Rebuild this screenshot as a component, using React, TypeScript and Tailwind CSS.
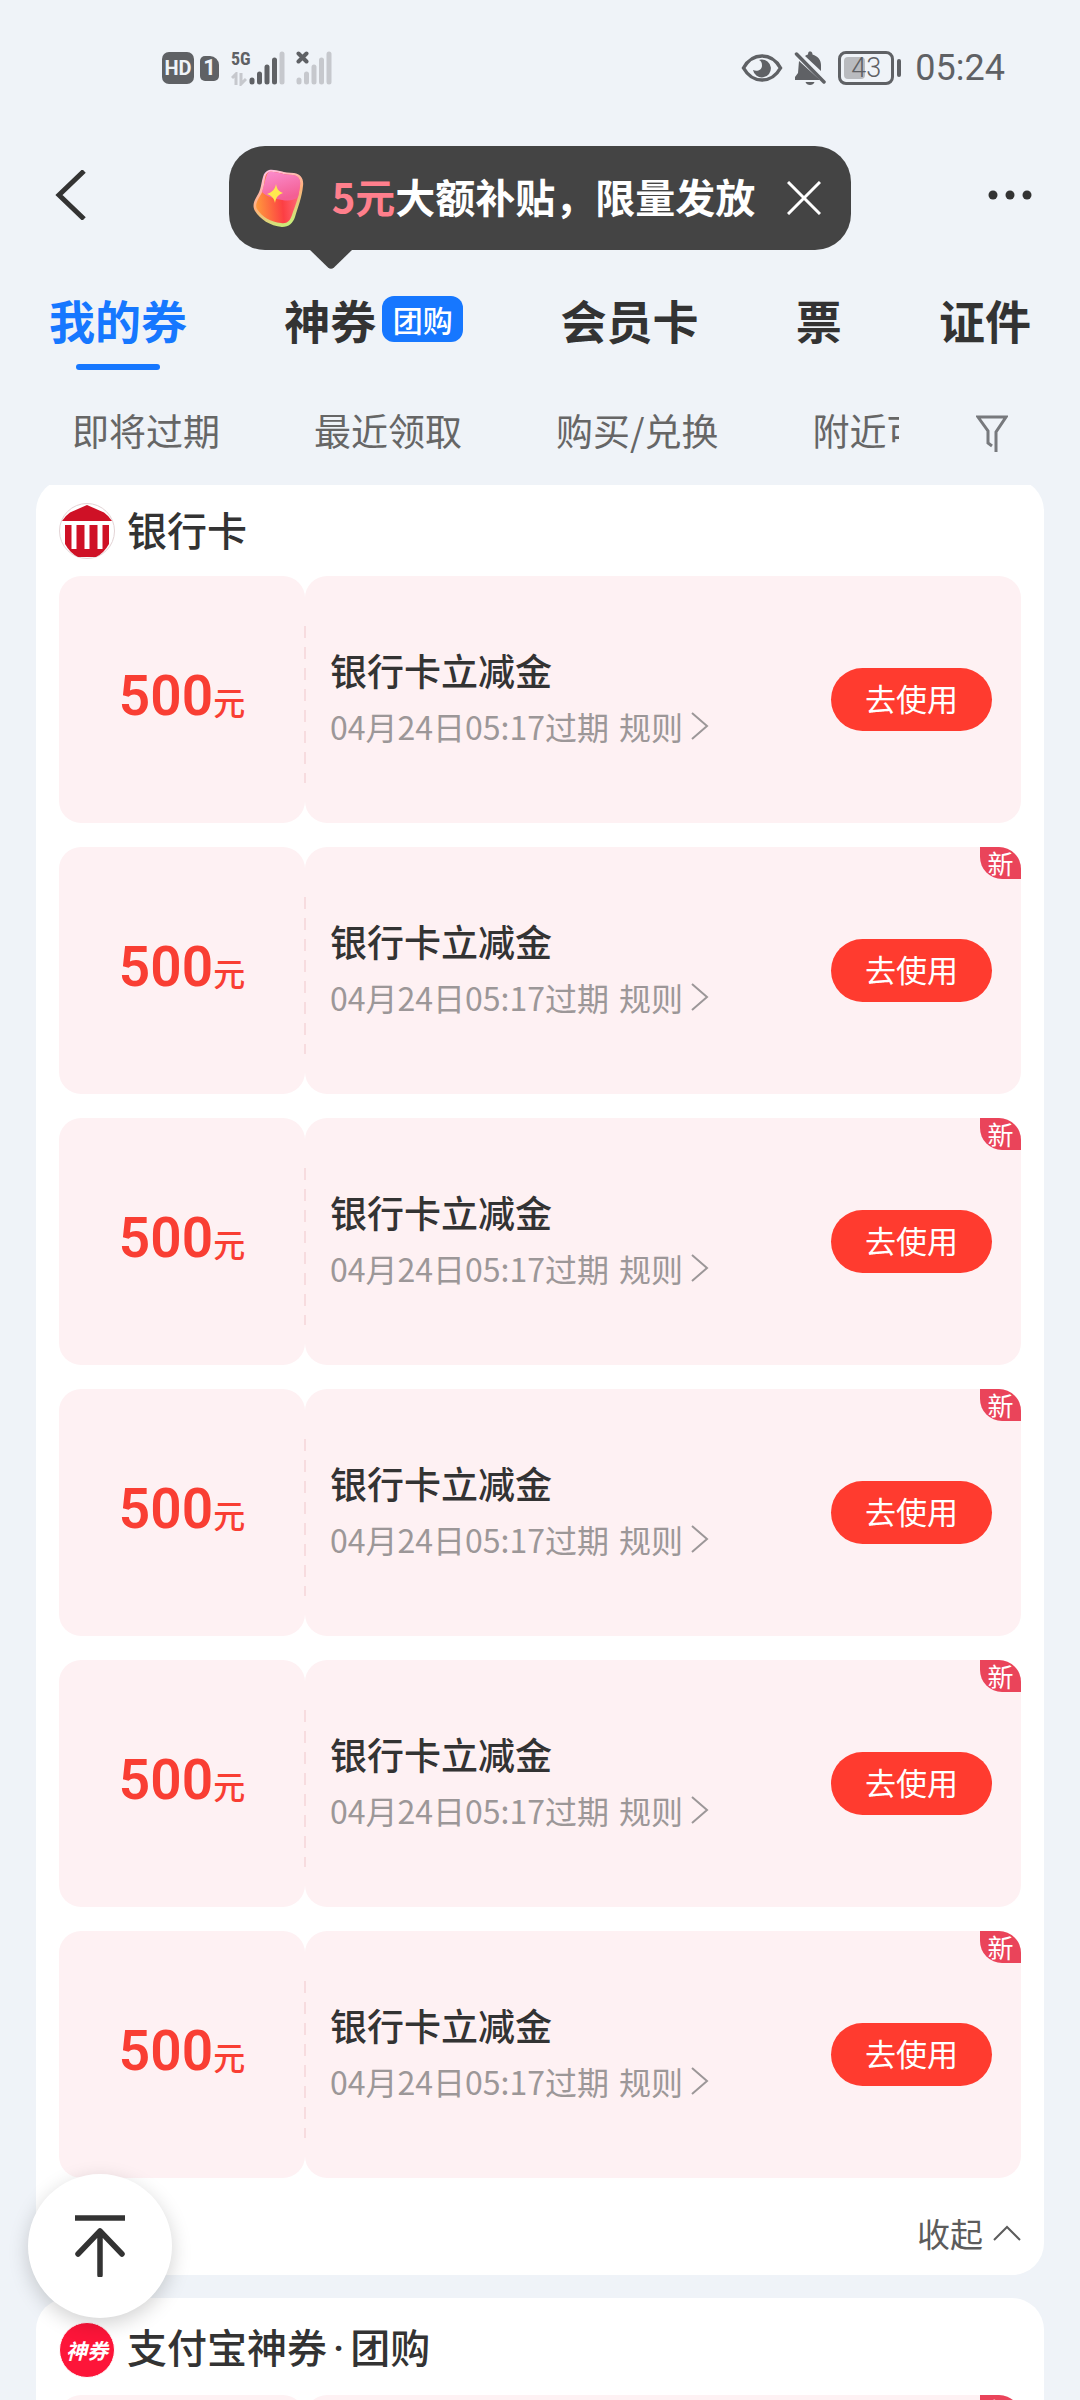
import React, { useState } from 'react';

interface Coupon {
  id: number;
  amount: string;
  title: string;
  expires: string;
  isNew: boolean;
}

const makeCoupons = (count: number, firstIsNew: boolean): Coupon[] =>
  Array.from({ length: count }, (_, i) => ({
    id: i,
    amount: '500',
    title: '银行卡立减金',
    expires: '04月24日05:17过期',
    isNew: firstIsNew || i > 0,
  }));

const bankCoupons = makeCoupons(6, false);
const dealCoupons = makeCoupons(1, true);

const tabs = [
  { label: '我的券' },
  { label: '神券', badge: '团购' },
  { label: '会员卡' },
  { label: '票' },
  { label: '证件' },
];

const filters = ['即将过期', '最近领取', '购买/兑换', '附近可用'];

const SignalBars: React.FC<{ active: number }> = ({ active }) => (
  <svg className="w-[36px] h-[34px]" viewBox="0 0 36 34" fill="none" strokeWidth="5" strokeLinecap="round">
    {[29, 23, 16, 9, 3].map((top, i) => (
      <path key={top} d={`M${3 + i * 7.5} ${top}V31`} stroke={i < active ? '#5f6165' : '#c6c8cd'} />
    ))}
  </svg>
);

const StatusBar: React.FC = () => (
  <div className="flex h-[136px] shrink-0 items-center justify-between pl-[162px] pr-[75px] text-[#5f6165]">
    <div className="flex items-center">
      <span className="flex h-8 w-8 items-center justify-center rounded-[7px] bg-[#5f6165] font-['Roboto',sans-serif] text-[20px] font-bold leading-none text-[#eff3f8]">
        HD
      </span>
      <span className="ml-1.5 flex h-[25px] w-[19px] items-center justify-center rounded-[5px] rounded-tr-[9px] bg-[#5f6165] font-['Roboto',sans-serif] text-[22px] font-bold leading-none text-[#eff3f8]">
        1
      </span>
      <span className="ml-3 flex h-[36px] w-[18px] flex-col justify-between">
        <span className="font-['Roboto_Condensed','Liberation_Sans_Narrow',Roboto,sans-serif] text-[18px] font-bold leading-[18px]">5G</span>
        <svg className="h-[14px] w-[16px]" viewBox="0 0 16 14" fill="none" stroke="#c6c8cd" strokeWidth="3">
          <path d="M1 6L5 2V13M10 1V12L15 7" />
        </svg>
      </span>
      <SignalBars active={4} />
      <span className="relative ml-[11px]">
        <SignalBars active={0} />
        <svg className="absolute left-0 top-0 h-[13px] w-[13px]" viewBox="0 0 13 13" stroke="#5f6165" strokeWidth="4" strokeLinecap="round">
          <path d="M2.500 2.500L10.500 10.500M10.500 2.500L2.500 10.500" />
        </svg>
      </span>
    </div>

    <div className="flex items-center">
      <svg className="h-[30px] w-[42px]" viewBox="0 0 42 30" fill="none">
        <path d="M2.500 15C7 7 13.500 3 21 3s14 4 18.500 12C35 23 28.500 27 21 27S7 23 2.500 15z" stroke="currentColor" strokeWidth="3.500" />
        <path d="M20 6.500a9 9 0 1 1-8 10.500c4 2 9 0 9-4.500 0-3-1-4.500-3-5.500z" fill="currentColor" />
      </svg>
      <svg className="ml-[11px] h-[34px] w-[32px]" viewBox="0 0 32 34" fill="currentColor">
        <path d="M5 10L26 29H1v-3l3-4z" />
        <path d="M11 5c1-.8 2-1.300 3-1.600C14 1 15 .5 16 .5s2.500.5 2.500 2.900C24 5 27 9 27 14v6z" />
        <path d="M11.500 31h9c-1 4-8 4-9 0z" />
        <path d="M2.500 3L30 31" stroke="currentColor" strokeWidth="3.500" strokeLinecap="round" />
      </svg>
      <span className="relative ml-3 flex h-[34px] w-[56px] items-center justify-center rounded-[8px] border-[3px] border-[#5f6165]">
        <span className="absolute left-[3px] top-[3px] h-[22px] w-[21px] rounded-[4px] bg-[#b9bbbf]" />
        <span className="relative font-['Roboto',sans-serif] text-[27px] font-light leading-none">43</span>
      </span>
      <span className="ml-[3px] h-[18px] w-[4px] rounded-full bg-[#5f6165]" />
      <span className="ml-3.5 font-['Roboto',sans-serif] text-[36px] leading-[44px]">05:24</span>
    </div>
  </div>
);

const EnvelopeIcon: React.FC = () => (
  <svg className="h-[60px] w-[54px] shrink-0" viewBox="0 0 54 60">
    <defs>
      <linearGradient id="envBody" x1="0" y1="0.700" x2="1" y2="0.600">
        <stop offset="0" stopColor="#ff9a3c" />
        <stop offset="0.600" stopColor="#fc3f43" />
        <stop offset="1" stopColor="#ff6a7a" />
      </linearGradient>
      <linearGradient id="envFlap" x1="0" y1="0" x2="0.400" y2="1">
        <stop offset="0" stopColor="#fb8fd0" />
        <stop offset="1" stopColor="#f45f94" />
      </linearGradient>
      <linearGradient id="envEdge" x1="0.300" y1="0" x2="0.700" y2="1">
        <stop offset="0" stopColor="#ffc0e2" />
        <stop offset="0.500" stopColor="#ffb07a" />
        <stop offset="1" stopColor="#c4f27a" />
      </linearGradient>
    </defs>
    <path d="M17 2c8-1 13 3 25 3 7 1 10 6 9 13-1 11-5 21-8 31-2 6-6 10-13 10C18 58 8 51 3 43c-3-5-1-10 2-15 4-6 4-12 6-19 1-4 3-6 6-7z" fill="url(#envEdge)" />
    <path d="M17 4c7-1 13 3 24 3 6 1 8 5 7 11-1 11-5 20-8 29-2 6-5 9-11 8C19 54 10 49 5 41c-2-4 0-8 3-13 4-6 4-12 5-18 1-4 2-5 4-6z" fill="url(#envBody)" />
    <path d="M17 4c7-1 13 3 24 3 6 1 8 5 7 11l-2 11c-5 4-10 4-16 3-7-1-15-3-20-8 1-4 2-7 3-11 1-4 2-8 4-9z" fill="url(#envFlap)" />
    <path d="M24 16c1 5 2 7 7 9-5 2-7 4-8 10-1-5-3-7-8-9 5-2 8-4 9-10z" fill="#ffe94f" />
  </svg>
);

const PromoBubble: React.FC<{ onClose: () => void }> = ({ onClose }) => (
  <div className="relative flex h-[104px] items-center rounded-[36px] bg-[#444] px-[23px]">
    <EnvelopeIcon />
    <p className="ml-[26px] whitespace-nowrap pb-1 text-[40px] font-bold leading-[60px] text-white">
      <span className="text-[#ff7f8c]">5元</span>大额补贴，限量发放
    </p>
    <button type="button" aria-label="关闭" onClick={onClose} className="ml-[25px] flex h-12 w-12 items-center justify-center">
      <svg className="h-[34px] w-[34px]" viewBox="0 0 34 34" stroke="#fff" strokeWidth="3">
        <path d="M1 1L33 33M33 1L1 33" />
      </svg>
    </button>
    <svg className="absolute left-[80px] top-[103px] h-[21px] w-[44px]" viewBox="0 0 44 21">
      <path d="M0 0H44L25 18.500Q22 21 19 18.500z" fill="#444" />
    </svg>
  </div>
);

const BankIcon: React.FC = () => (
  <svg className="h-[56px] w-[56px] shrink-0" viewBox="0 0 56 56">
    <circle cx="28" cy="28" r="27.500" fill="#fff" stroke="#e3d3d5" />
    <path d="M28 2L45 9.500Q50 13 53 18H3Q6 13 11 9.500z" fill="#cf1126" />
    <path d="M6 22H50V41Q45 50 37 54H19Q11 50 6 41z" fill="#cf1126" />
    <path d="M15 22V46M28 22V46M41 22V46" stroke="#fff" strokeWidth="5" />
  </svg>
);

const CouponRow: React.FC<{ coupon: Coupon }> = ({ coupon }) => (
  <li className="flex h-[247px]">
    <div className="flex w-[246px] shrink-0 items-center justify-center rounded-[22px] bg-[#fef1f3] pb-2 text-[#f93e33]">
      <p className="flex items-baseline">
        <span className="font-['Roboto',sans-serif] text-[55px] font-semibold leading-[64px]">{coupon.amount}</span>
        <span className="text-[32px] font-medium leading-[48px]">元</span>
      </p>
    </div>
    <div className="relative flex flex-1 items-center justify-between rounded-[22px] bg-[#fef1f3] pl-[25px] pr-[29px]">
      <span className="absolute -left-px top-[50px] h-[157px] w-[2px] bg-[repeating-linear-gradient(to_bottom,#f7dcdf_0_12px,transparent_12px_21px)]" />
      <div className="pb-1">
        <h3 className="text-[37px] font-medium leading-[56px] text-[#333]">{coupon.title}</h3>
        <p className="flex items-center gap-2.5 text-[32px] leading-[56px] text-[#9c9798]">
          <span>{coupon.expires}</span>
          <button type="button" className="flex items-center gap-2">
            规则
            <svg className="h-[28px] w-[18px]" viewBox="0 0 18 28" fill="none" stroke="currentColor" strokeWidth="2">
              <path d="M1 1L16 14L1 27" />
            </svg>
          </button>
        </p>
      </div>
      <button type="button" className="h-[63px] w-[161px] rounded-full bg-[#ff3b2f] pb-1 text-[31px] leading-[56px] text-white">
        去使用
      </button>
      {coupon.isNew && (
        <span className="absolute right-0 top-0 h-[32px] w-[41px] rounded-bl-[22px] rounded-tr-[22px] bg-[#ea445a] text-center text-[26px] leading-[32px] text-white">
          新
        </span>
      )}
    </div>
  </li>
);

interface CouponSectionProps {
  icon: React.ReactNode;
  title: React.ReactNode;
  coupons: Coupon[];
}

const CouponSection: React.FC<CouponSectionProps> = ({ icon, title, coupons }) => {
  const [isExpanded, setIsExpanded] = useState(true);
  const visible = isExpanded ? coupons : coupons.slice(0, 1);

  return (
    <section className="shrink-0 rounded-[32px] bg-white px-[23px]">
      <div className="flex h-[97px] items-center gap-3 pt-[7px]">
        {icon}
        <h2 className="pb-1 text-[40px] font-medium leading-[56px] text-[#333]">{title}</h2>
      </div>
      <ul className="flex flex-col gap-6">
        {visible.map((coupon) => (
          <CouponRow key={coupon.id} coupon={coupon} />
        ))}
      </ul>
      {coupons.length > 1 && (
        <div className="flex h-[97px] items-center justify-end pt-3">
          <button
            type="button"
            onClick={() => setIsExpanded(!isExpanded)}
            className="flex items-center gap-2.5 text-[33px] leading-[48px] text-[#5c5c5c]"
          >
            {isExpanded ? '收起' : '展开'}
            <svg className={`h-[16px] w-[28px] ${isExpanded ? '' : 'rotate-180'}`} viewBox="0 0 28 16" fill="none" stroke="currentColor" strokeWidth="2">
              <path d="M1 15L14 2L27 15" />
            </svg>
          </button>
        </div>
      )}
    </section>
  );
};

const App: React.FC = () => {
  const [activeTab, setActiveTab] = useState(0);
  const [showPromo, setShowPromo] = useState(true);

  return (
    <div className="flex h-screen flex-col overflow-hidden bg-[#eff3f8] font-['Noto_Sans_CJK_SC',sans-serif]">
      <StatusBar />

      <header className="relative z-10 flex h-[124px] shrink-0 items-center justify-between px-[46px] text-[#333]">
        <button type="button" aria-label="返回" className="flex h-14 w-12 items-center justify-center pb-1.5">
          <svg className="h-[50px] w-[32px]" viewBox="0 0 32 50" fill="none" stroke="currentColor" strokeWidth="5">
            <path d="M30 1L5 25L30 49" />
          </svg>
        </button>
        {showPromo && <PromoBubble onClose={() => setShowPromo(false)} />}
        <button type="button" aria-label="更多" className="flex h-14 w-12 items-center justify-center pb-1.5">
          <svg className="h-[10px] w-[44px]" viewBox="0 0 44 10" fill="currentColor">
            <circle cx="5" cy="5" r="4.500" />
            <circle cx="22" cy="5" r="4.500" />
            <circle cx="39" cy="5" r="4.500" />
          </svg>
        </button>
      </header>

      <nav className="flex h-[120px] shrink-0 items-stretch justify-between px-[49px]">
        {tabs.map((tab, i) => (
          <button
            key={tab.label}
            type="button"
            onClick={() => setActiveTab(i)}
            className={`relative flex items-center pb-0.5 text-[46px] font-bold leading-[64px] ${i === activeTab ? 'text-[#1677ff]' : 'text-[#333]'}`}
          >
            {tab.label}
            {tab.badge && (
              <span className="ml-1.5 flex h-[46px] w-[81px] items-center justify-center rounded-[12px] bg-[#1677ff] text-[30px] font-medium leading-none text-white">
                {tab.badge}
              </span>
            )}
            {i === activeTab && (
              <span className="absolute bottom-[10px] left-1/2 h-[6px] w-[84px] -translate-x-1/2 rounded-full bg-[#1677ff]" />
            )}
          </button>
        ))}
      </nav>

      <div className="flex h-[105px] shrink-0 items-center pl-[72px] pr-[72px] text-[#666]">
        <div className="mr-[77px] flex flex-1 gap-[94px] overflow-hidden pb-1.5">
          {filters.map((filter) => (
            <button key={filter} type="button" className="shrink-0 whitespace-nowrap text-[37px] leading-[56px]">
              {filter}
            </button>
          ))}
        </div>
        <button type="button" aria-label="筛选" className="shrink-0">
          <svg className="h-[38px] w-[32px]" viewBox="0 0 32 38" fill="none" stroke="#77797d" strokeWidth="3">
            <path d="M20 38V18L30 3H2L12 17V29L16 32" />
          </svg>
        </button>
      </div>

      <main className="flex flex-1 flex-col overflow-hidden px-9">
        <div className="-mt-1.5 flex flex-col gap-[23px]">
          <CouponSection icon={<BankIcon />} title="银行卡" coupons={bankCoupons} />
          <CouponSection
            icon={
              <span className="flex h-[56px] w-[56px] shrink-0 items-center justify-center rounded-full border border-white bg-[#fd1539] text-[21px] font-bold italic leading-none text-white">
                神券
              </span>
            }
            title={
              <>
                支付宝神券<span className="px-1.5 font-['Roboto',sans-serif]">·</span>团购
              </>
            }
            coupons={dealCoupons}
          />
        </div>
      </main>

      <button
        type="button"
        aria-label="回到顶部"
        className="fixed bottom-[82px] left-7 flex h-36 w-36 items-center justify-center rounded-full bg-white shadow-[0_6px_20px_rgba(0,0,0,0.180)]"
      >
        <svg className="h-[62px] w-[50px]" viewBox="0 0 50 62" fill="none" stroke="#333" strokeWidth="5.500">
          <path d="M0 3H50" />
          <path d="M3 39L25 16L47 39M25 16V60" strokeLinecap="round" strokeLinejoin="round" />
        </svg>
      </button>
    </div>
  );
};

export default App;
